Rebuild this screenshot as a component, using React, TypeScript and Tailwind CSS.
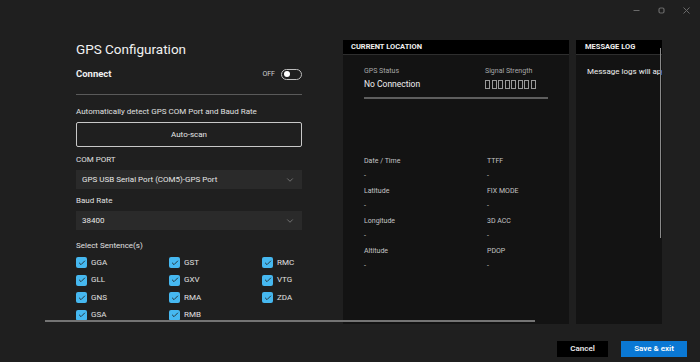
import { ChevronDown, Check } from 'lucide-react';

const sentences = ['GGA', 'GST', 'RMC', 'GLL', 'GXV', 'VTG', 'GNS', 'RMA', 'ZDA', 'GSA', 'RMB'];

const fields = [
  ['Date / Time', 'TTFF'],
  ['Latitude', 'FIX MODE'],
  ['Longitude', '3D ACC'],
  ['Altitude', 'PDOP']
];

function Dropdown({ value }: { value: string }) {
  return (
    <div className="mt-[4px] flex h-[19px] items-center justify-between bg-[#2a2a2a] pl-[6px] pr-[7px] text-[8px] text-[#e6e6e6]">
      <span>{value}</span>
      <ChevronDown size={10} strokeWidth={1.5} className="text-[#9a9a9a]" />
    </div>
  );
}

export default function App() {
  return (
    <div className="flex h-[362px] w-[700px] flex-col overflow-hidden bg-[#1f1f1f] font-['Roboto',sans-serif] text-white">
      {/* window controls */}
      <div className="flex h-[20px] items-center justify-end gap-[18px] pr-[10px] text-[#6a6a6a]">
        <svg width="7" height="7" viewBox="0 0 7 7">
          <path d="M0.5 3.5h6" stroke="currentColor" strokeWidth="1" />
        </svg>
        <svg width="7" height="7" viewBox="0 0 7 7">
          <rect x="1" y="1" width="5" height="5" rx="1.5" fill="none" stroke="currentColor" strokeWidth="1.2" />
        </svg>
        <svg width="7" height="7" viewBox="0 0 7 7">
          <path d="M0.5 0.5l6 6M6.5 0.5l-6 6" stroke="currentColor" strokeWidth="1" />
        </svg>
      </div>

      <div className="relative flex h-[304px] overflow-hidden pl-[76px] pt-[20px]">
        {/* left: configuration */}
        <div className="w-[226px] shrink-0">
          <h1 className="text-[13.5px] leading-[18px] text-[#f2f2f2]">GPS Configuration</h1>
          <div className="mt-[8px] flex h-[16px] items-center justify-between">
            <span className="text-[9.5px] font-bold text-[#f0f0f0]">Connect</span>
            <div className="flex items-center gap-[6px]">
              <span className="text-[7px] text-[#cfcfcf]">OFF</span>
              <div className="flex h-[11px] w-[21px] items-center rounded-full border border-[#bdbdbd] pl-[2px]">
                <div className="h-[6px] w-[6px] rounded-full bg-white" />
              </div>
            </div>
          </div>
          <div className="mt-[12px] h-px bg-[#5a5a5a]" />
          <p className="mt-[11px] text-[8px] leading-[12px] text-[#e0e0e0]">
            Automatically detect GPS COM Port and Baud Rate
          </p>
          <div className="mt-[4px] flex h-[25px] items-center justify-center rounded-[2px] border border-[#c8c8c8] text-[8px] text-[#e6e6e6]">
            Auto-scan
          </div>
          <p className="mt-[7px] text-[8px] leading-[12px] text-[#e0e0e0]">COM PORT</p>
          <Dropdown value="GPS USB Serial Port (COM5)-GPS Port" />
          <p className="mt-[6px] text-[8px] leading-[12px] text-[#e0e0e0]">Baud Rate</p>
          <Dropdown value="38400" />
          <p className="mt-[10px] text-[8px] leading-[12px] text-[#e0e0e0]">Select Sentence(s)</p>
          <div className="mt-[2px] grid grid-cols-[93px_93px_40px] auto-rows-[17.5px]">
            {sentences.map((s) => (
              <div key={s} className="flex items-center gap-[4px]">
                <div className="flex h-[11px] w-[11px] items-center justify-center rounded-[2px] bg-[#46b8f0]">
                  <Check size={8} strokeWidth={2.5} className="text-[#1f1f1f]" />
                </div>
                <span className="text-[8px] text-[#e0e0e0]">{s}</span>
              </div>
            ))}
          </div>
        </div>

        {/* current location */}
        <div className="ml-[41px] flex h-[284px] w-[226px] shrink-0 flex-col bg-[#131313]">
          <div className="flex h-[15px] items-center border-b border-[#2e2e2e] bg-black pl-[8px] text-[7.5px] font-bold text-[#f0f0f0]">
            CURRENT LOCATION
          </div>
          <div className="pl-[21px] pr-[21px] pt-[11px]">
            <div className="grid grid-cols-[121px_1fr]">
              <div>
                <p className="text-[7px] leading-[10px] text-[#a8a8a8]">GPS Status</p>
                <p className="mt-[2px] text-[8.5px] leading-[12px] text-[#f0f0f0]">No Connection</p>
              </div>
              <div>
                <p className="text-[7px] leading-[10px] text-[#a8a8a8]">Signal Strength</p>
                <div className="mt-[4px] flex gap-[1.5px]">
                  {Array.from({ length: 8 }).map((_, i) => (
                    <div key={i} className="h-[9px] w-[5px] border border-[#9a9a9a]" />
                  ))}
                </div>
              </div>
            </div>
            <div className="mt-[7px] h-[1.5px] bg-[#5e5e5e]" />
            <div className="mt-[55px] grid grid-cols-[123px_1fr] text-[7px] leading-[15px] text-[#c4c4c4]">
              {fields.map(([a, b]) => (
                <div key={a} className="contents">
                  <div>
                    <p>{a}</p>
                    <p>-</p>
                  </div>
                  <div>
                    <p>{b}</p>
                    <p>-</p>
                  </div>
                </div>
              ))}
            </div>
          </div>
        </div>

        {/* message log */}
        <div className="relative ml-[7px] flex h-[284px] w-[86px] shrink-0 flex-col overflow-hidden bg-[#131313]">
          <div className="flex h-[15px] items-center border-b border-[#2e2e2e] bg-black pl-[9px] text-[7.5px] font-bold whitespace-nowrap text-[#f0f0f0]">
            MESSAGE LOG
          </div>
          <p className="mt-[11px] pl-[11px] text-[8px] leading-[12px] whitespace-nowrap text-[#f0f0f0]">
            Message logs will appear here
          </p>
          <div className="absolute right-[1px] top-[8px] h-[190px] w-px bg-[#8a8a8a]" />
        </div>

        {/* horizontal scrollbar */}
        <div className="absolute left-[45px] top-[300px] h-[2px] w-[490px] bg-[#747474]" />
      </div>

      {/* footer */}
      <div className="flex flex-1 items-start justify-end gap-[13px] pr-[13px] pt-[17px]">
        <button className="h-[16px] w-[51px] bg-black text-[8px] font-semibold text-[#eaeaea]">Cancel</button>
        <button className="h-[16px] w-[66px] bg-[#0a78d4] text-[8px] font-semibold text-white">Save &amp; exit</button>
      </div>
    </div>
  );
}
